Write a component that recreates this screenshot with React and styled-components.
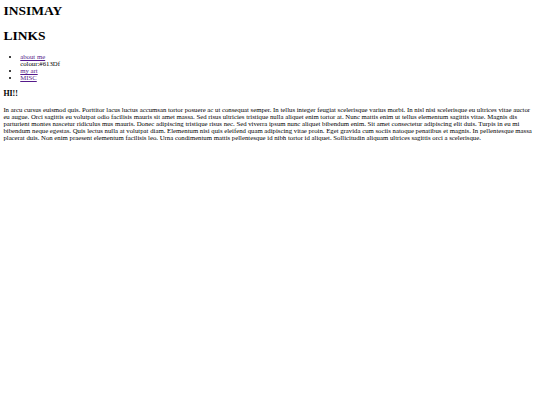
import styled, { createGlobalStyle } from 'styled-components';

const Global = createGlobalStyle`
  body {
    margin: 3.375px;
    font-family: "Liberation Serif", "Times New Roman", serif;
    font-size: 6.75px;
    color: #000;
    background: #fff;
  }
`;

const Title = styled.h1`
  font-size: 2em;
  margin: ${p => (p.$first ? '0 0 0.67em' : '0.67em 0')};
  font-weight: bold;
`;

const LinkList = styled.ul`
  margin: 1em 0;
  padding-left: 16.875px;
  list-style: disc;
`;

const NavLink = styled.a`
  color: #551a8b;
  text-decoration: underline;
`;

const Note = styled.div``;

const Greeting = styled.h3`
  font-size: 1.17em;
  margin: 1em 0;
`;

const Text = styled.p`
  margin: 1em 0;
`;

export default function App() {
  return (
    <>
      <Global />
      <Title $first>INSIMAY</Title>
      <Title>LINKS</Title>
      <LinkList>
        <li>
          <NavLink href="#">about me</NavLink>
          <Note>colour:#613Df</Note>
        </li>
        <li><NavLink href="#">my art</NavLink></li>
        <li><NavLink href="#">MISC</NavLink></li>
      </LinkList>
      <Greeting>HI!!</Greeting>
      <Text>
        In arcu cursus euismod quis. Porttitor lacus luctus accumsan tortor posuere ac ut consequat semper. In tellus integer feugiat scelerisque varius morbi. In nisl nisi scelerisque eu ultrices vitae auctor eu augue. Orci sagittis eu volutpat odio facilisis mauris sit amet massa. Sed risus ultricies tristique nulla aliquet enim tortor at. Nunc mattis enim ut tellus elementum sagittis vitae. Magnis dis parturient montes nascetur ridiculus mus mauris. Donec adipiscing tristique risus nec. Sed viverra ipsum nunc aliquet bibendum enim. Sit amet consectetur adipiscing elit duis. Turpis in eu mi bibendum neque egestas. Quis lectus nulla at volutpat diam. Elementum nisi quis eleifend quam adipiscing vitae proin. Eget gravida cum sociis natoque penatibus et magnis. In pellentesque massa placerat duis. Non enim praesent elementum facilisis leo. Urna condimentum mattis pellentesque id nibh tortor id aliquet. Sollicitudin aliquam ultrices sagittis orci a scelerisque.
      </Text>
    </>
  );
}
